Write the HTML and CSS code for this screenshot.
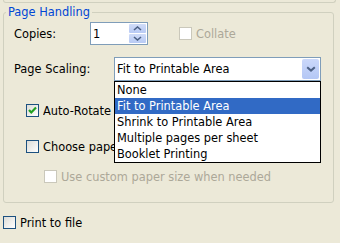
FILE: index.html
```html
<!DOCTYPE html>
<html>
<head>
<meta charset="utf-8">
<link rel="stylesheet" href="styles.css">
</head>
<body>
<div class="prev-group"></div>
<div class="group">
  <div class="legend">Page Handling</div>
  <div class="row copies-row">
    <span class="label copies-label">Copies:</span>
    <div class="spin">
      <span class="spin-val">1</span>
      <div class="spin-btns">
        <span class="spin-btn"><svg width="9" height="5" viewBox="0 0 9 5"><polyline points="1,4 4.5,1 8,4" fill="none" stroke="#4d6185" stroke-width="1.6"/></svg></span>
        <span class="spin-btn"><svg width="9" height="5" viewBox="0 0 9 5"><polyline points="1,1 4.5,4 8,1" fill="none" stroke="#4d6185" stroke-width="1.6"/></svg></span>
      </div>
    </div>
    <div class="chk disabled collate"><span class="box"></span><span>Collate</span></div>
  </div>
  <div class="row scaling-row">
    <span class="label scaling-label">Page Scaling:</span>
    <div class="combo">
      <span class="combo-val">Fit to Printable Area</span>
      <span class="combo-btn"><svg width="10" height="6" viewBox="0 0 10 6"><polyline points="1.2,1.2 5,4.6 8.8,1.2" fill="none" stroke="#4d6185" stroke-width="2"/></svg></span>
      <ul class="list">
        <li>None</li>
        <li class="sel">Fit to Printable Area</li>
        <li>Shrink to Printable Area</li>
        <li>Multiple pages per sheet</li>
        <li>Booklet Printing</li>
      </ul>
    </div>
  </div>
  <div class="chk auto"><span class="box checked"><svg width="11" height="11" viewBox="0 0 11 11"><polyline points="2,5 4.3,7.5 9,2.6" fill="none" stroke="#21a121" stroke-width="2.2"/></svg></span><span class="clip">Auto-Rotate and Center</span></div>
  <div class="chk choose"><span class="box"></span><span class="clip">Choose paper source by PDF page size</span></div>
  <div class="chk disabled custom"><span class="box"></span><span>Use custom paper size when needed</span></div>
</div>
<div class="chk print"><span class="box"></span><span>Print to file</span></div>
</body>
</html>
```
FILE: styles.css
```css
html, body {
  margin: 0;
  padding: 0;
  background: #ece9d8;
  overflow: hidden;
}
body {
  width: 340px;
  height: 243px;
  font-family: "DejaVu Sans", sans-serif;
  font-size: 11.4px;
  color: #000;
  padding-left: 3px;
  box-sizing: border-box;
}
.prev-group {
  width: 331px;
  height: 2px;
  box-sizing: content-box;
  border: 1px solid #d0d0bf;
  border-top: none;
  border-radius: 0 0 3px 3px;
}
.group {
  width: 331px;
  box-sizing: border-box;
  margin-top: 9px;
  border: 1px solid #d0d0bf;
  border-radius: 3px;
  padding: 0 0 18px 10px;
}
.legend {
  display: block;
  width: max-content;
  margin: -8px 0 0 -8px;
  padding: 0 2px;
  line-height: 14px;
  height: 14px;
  background: #ece9d8;
  color: #0046d5;
}
.row {
  display: flex;
  align-items: center;
}
.copies-row {
  margin-top: 3px;
  height: 23px;
}
.label {
  line-height: 14px;
}
.copies-label {
  width: 76px;
}
.spin {
  width: 58px;
  height: 23px;
  box-sizing: border-box;
  border: 1px solid #7f9db9;
  background: #fff;
  display: flex;
  align-items: center;
  justify-content: space-between;
  padding: 1px 1px 1px 2px;
}
.spin-val {
  line-height: 14px;
}
.spin-btns {
  display: flex;
  flex-direction: column;
  gap: 1px;
  height: 19px;
  width: 17px;
}
.spin-btn {
  flex: 1;
  display: flex;
  align-items: center;
  justify-content: center;
  background: linear-gradient(#d0dcf8, #b8caf4);
  border-radius: 1px;
}
.collate {
  margin-left: 31px;
}
.scaling-row {
  margin-top: 12px;
  height: 24px;
}
.scaling-label {
  width: 100px;
}
.combo {
  position: relative;
  width: 207px;
  height: 24px;
  box-sizing: border-box;
  border: 1px solid #7f9db9;
  background: #fff;
  display: flex;
  align-items: center;
  justify-content: space-between;
  padding: 1px 1px 1px 2px;
}
.combo-val {
  line-height: 14px;
}
.combo-btn {
  width: 17px;
  height: 20px;
  display: flex;
  align-items: center;
  justify-content: center;
  background: linear-gradient(#cbd8fa, #b4c7f5);
  border-radius: 2px;
}
.list {
  position: absolute;
  top: 23px;
  left: -1px;
  width: 207px;
  box-sizing: border-box;
  margin: 0;
  padding: 0;
  list-style: none;
  border: 1px solid #000;
  background: #fff;
  z-index: 2;
}
.list li {
  height: 16px;
  line-height: 16px;
  padding-left: 2px;
  white-space: nowrap;
}
.list li.sel {
  background: #316ac5;
  color: #fff;
}
.chk {
  display: flex;
  align-items: center;
  height: 15px;
  line-height: 14px;
  white-space: nowrap;
}
.clip {
  width: 71px;
  overflow: hidden;
}
.box {
  width: 13px;
  height: 13px;
  box-sizing: border-box;
  border: 1px solid #1c5180;
  background: linear-gradient(135deg, #dcdcd7, #fff);
  margin-right: 4px;
  flex: none;
  display: flex;
  align-items: center;
  justify-content: center;
}
.box svg {
  display: block;
}
.chk.disabled {
  color: #aca899;
}
.chk.disabled .box {
  border-color: #cac8bb;
  background: #fff;
}
.auto {
  margin: 22px 0 0 12px;
}
.choose {
  margin: 21px 0 0 12px;
}
.custom {
  margin: 15px 0 0 30px;
}
.print {
  margin-top: 12px;
}
```
